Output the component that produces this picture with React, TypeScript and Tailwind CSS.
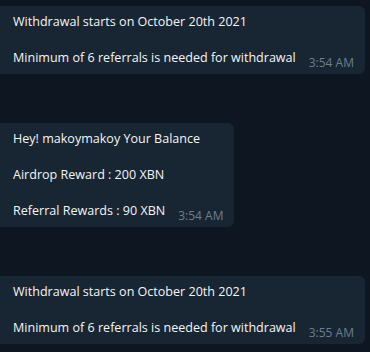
const messages = [
  {
    lines: ["Withdrawal starts on October 20th 2021", "", "Minimum of 6 referrals is needed for withdrawal"],
    time: "3:54 AM",
  },
  {
    lines: ["Hey! makoymakoy Your Balance", "", "Airdrop Reward : 200 XBN", "", "Referral Rewards : 90 XBN"],
    time: "3:54 AM",
  },
  {
    lines: ["Withdrawal starts on October 20th 2021", "", "Minimum of 6 referrals is needed for withdrawal"],
    time: "3:55 AM",
  },
];

export default function App() {
  return (
    <div
      className="w-[370px] h-[352px] overflow-hidden bg-[#0e1621] pt-[6px] flex flex-col items-start gap-[49px]"
      style={{ fontFamily: '"Open Sans", "Noto Sans", sans-serif' }}
    >
      {messages.map((m, i) => {
        const last = m.lines.length - 1;
        return (
          <div
            key={i}
            className="flex flex-col bg-[#182533] rounded-r-[6px] pl-[13px] pr-[11px] pt-[7px] pb-[7px] text-[12.55px] leading-[18px] text-[#f5f5f5] whitespace-pre"
          >
            {m.lines.map((l, j) =>
              j === last ? (
                <div key={j} className="h-[18px] flex items-end justify-between">
                  <span>{l}</span>
                  <span className="ml-[13px] text-[12px] leading-[14px] text-[#6d7f8f] whitespace-nowrap translate-y-[3px]">
                    {m.time}
                  </span>
                </div>
              ) : (
                <div key={j} className="h-[18px]">
                  {l}
                </div>
              )
            )}
          </div>
        );
      })}
    </div>
  );
}
